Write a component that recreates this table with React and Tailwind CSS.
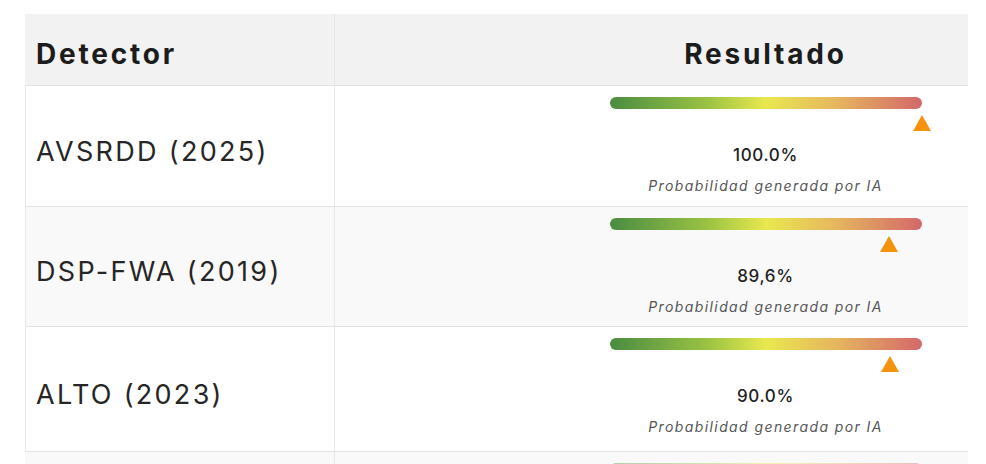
const rows = [
  { name: 'AVSRDD (2025)', value: 100.0, label: '100.0%', height: 'h-[121px]', bg: 'bg-white' },
  { name: 'DSP-FWA (2019)', value: 89.6, label: '89,6%', height: 'h-[120px]', bg: 'bg-[#f9f9f9]' },
  { name: 'ALTO (2023)', value: 90.0, label: '90.0%', height: 'h-[125px]', bg: 'bg-white' },
];

const Bar = () => (
  <div className="h-3 w-full rounded-full bg-[linear-gradient(90deg,#4a8c42_0%,#9cc444_32%,#e9e84f_50%,#e6b75e_72%,#d3686a_100%)]" />
);

const ResultBar = ({ value, label }) => (
  <div className="flex w-[312px] flex-col items-center">
    <Bar />
    <div className="relative mt-1.5 h-4 w-full">
      <div
        className="absolute top-0 h-0 w-0 -translate-x-1/2 border-x-[9px] border-b-[16px] border-x-transparent border-b-[#f7920c]"
        style={{ left: `${value}%` }}
      />
    </div>
    <div className="mt-[14px] text-[17px] font-medium leading-5 tracking-[0.04em] text-[#222]">{label}</div>
    <div className="mt-[13px] text-[14px] italic leading-4 tracking-[0.1em] text-[#555]">Probabilidad generada por IA</div>
  </div>
);

export default function App() {
  return (
    <div className="h-[464px] w-[986px] overflow-hidden bg-white pl-[25px] pt-[14px] font-['Inter',sans-serif]">
      <div className="w-[943px]">
        <div className="flex h-[72px] border-b border-[#e3e3e3] bg-[#f2f2f2]">
          <div className="flex w-[310px] items-center border-r border-[#e6e6e6] pl-[11px] pt-2 text-[28px] font-bold tracking-[0.1em] text-[#1c1c1c]">
            Detector
          </div>
          <div className="flex flex-1 items-center justify-center pl-[228px] pt-2 text-[28px] font-bold tracking-[0.1em] text-[#1c1c1c]">
            Resultado
          </div>
        </div>
        {rows.map((row) => (
          <div key={row.name} className={`flex ${row.height} border-b border-[#e3e3e3] ${row.bg}`}>
            <div className="flex w-[310px] items-center border-x border-[#e8e8e8] pl-[10px] pt-3 text-[27px] tracking-[0.085em] text-[#262626]">
              {row.name}
            </div>
            <div className="flex flex-1 justify-center pl-[228px] pt-[11px]">
              <ResultBar value={row.value} label={row.label} />
            </div>
          </div>
        ))}
        <div className="flex h-[40px] bg-[#f9f9f9]">
          <div className="w-[310px] border-r border-[#e8e8e8]" />
          <div className="flex flex-1 justify-center pl-[228px] pt-[11px]">
            <div className="w-[312px] opacity-40">
              <Bar />
            </div>
          </div>
        </div>
      </div>
    </div>
  );
}
